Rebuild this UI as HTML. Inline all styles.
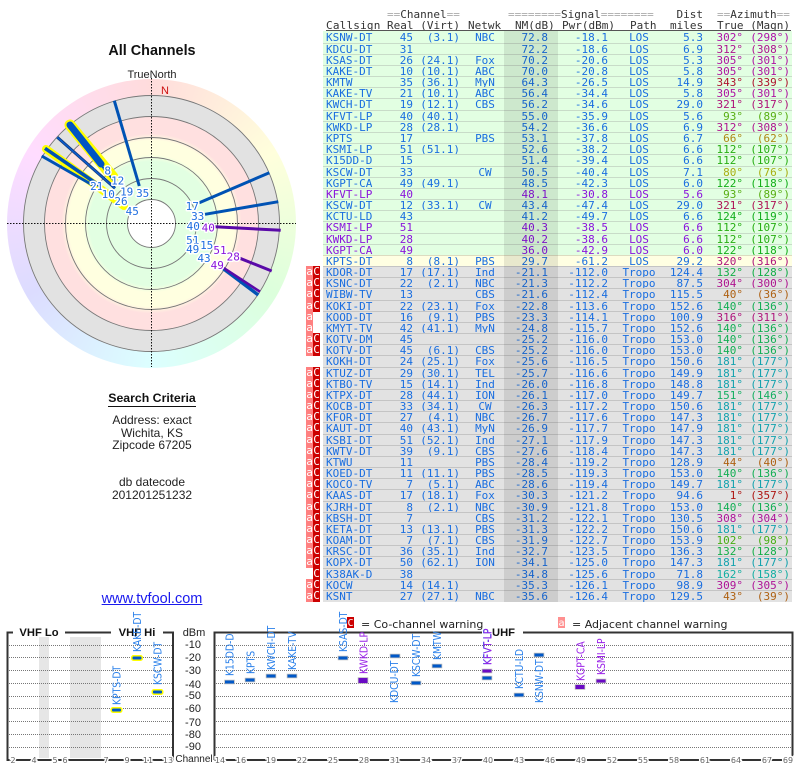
<!DOCTYPE html>
<html><head><meta charset="utf-8"><title>All Channels</title>
<style>
html,body{margin:0;padding:0;background:#fff}
body{width:800px;height:768px;overflow:hidden;position:relative;font-family:"Liberation Sans",sans-serif;color:#222}
.t{position:absolute;text-align:center;left:52px;width:200px;white-space:nowrap}
.h{position:absolute;font:11px/11px "DejaVu Sans Mono",monospace;color:#333;white-space:pre}
.h s{color:#aaa;text-decoration:none}
.r{position:absolute;left:323px;width:469px;height:12px;box-sizing:border-box;border-top:1px solid #c8dcc8;background:#e2ffe2;font:11px/11px "DejaVu Sans Mono",monospace;color:#1a6ee0}
.r i{position:absolute;top:0;font-style:normal;white-space:pre;width:60px;text-align:right}
.r i:nth-child(1){left:3px;text-align:left}
.r i:nth-child(2){left:30px}
.r i:nth-child(3){left:77px}
.r i:nth-child(4){left:132px;text-align:center}
.r i:nth-child(5){left:165px}
.r i:nth-child(6){left:225px}
.r i:nth-child(7){left:286px;text-align:center}
.r i:nth-child(8){left:320px}
.r i:nth-child(9){left:360px;color:hsl(var(--h),80%,38%)}
.r i:nth-child(10){left:407px;color:hsl(var(--h),80%,38%)}
.y{background:#ffffe2;border-top-color:#dcdcc0}
.x{background:#e2e2e2;border-top-color:#c4c4c4}
.p{color:#8a14dc}
.w{position:absolute;left:0;width:0;height:12px;font:11px/12px "DejaVu Sans Mono",monospace;color:#fff}
.w b,.w em{position:absolute;top:0;width:7px;height:12px;text-align:center;font-weight:normal;font-style:normal}
.w b{left:306px;background:#ff8080}
.w em{left:313px;background:#cc0000}
svg{position:absolute;left:0;top:0}
.disc{position:absolute;border-radius:50%}
</style></head><body>
<div class="t" style="top:43px;font-size:14.4px;line-height:16px;font-weight:bold;color:#111">All Channels</div>
<div class="t" style="top:69px;font-size:11px;line-height:13px">TrueNorth</div>
<div class="disc" style="left:7px;top:79px;width:289px;height:289px;background:conic-gradient(#ffdcdc,#ffffdc 60deg,#dcffdc 120deg,#dcffff 180deg,#dcdcff 240deg,#ffdcff 300deg,#ffdcdc)"></div>
<div class="disc" style="left:23px;top:95px;width:257px;height:257px;background:radial-gradient(circle closest-side,#fff 0,#fff 24px,#e2ffe2 24px,#e2ffe2 62px,#ffffe0 69px,#ffffe0 83px,#ffe0e0 90px,#ffe0e0 106.5px,#e2e2e2 107px,#e2e2e2 128px)"></div>
<div class="t" style="top:391px;font-size:12.3px;line-height:14px;font-weight:bold;color:#111"><span style="border-bottom:1px solid #111;padding-bottom:1px">Search Criteria</span></div>
<div class="t" style="top:414px;font-size:12px;line-height:12.5px">Address: exact<br>Wichita, KS<br>Zipcode 67205</div>
<div class="t" style="top:476px;font-size:12px;line-height:12.5px">db datecode<br>201201251232</div>
<div class="t" style="top:590px;font-size:14.5px;line-height:18px;color:#1a1aee;text-decoration:underline">www.tvfool.com</div>

<div class="h" style="left:387px;top:9px"><s>==</s>Channel<s>==</s></div>
<div class="h" style="left:508px;top:9px"><s>========</s>Signal<s>========</s></div>
<div class="h" style="left:676px;top:9px;width:27px;text-align:right">Dist</div>
<div class="h" style="left:717px;top:9px"><s>==</s>Azimuth<s>==</s></div>
<div class="h" style="left:326px;top:20px;letter-spacing:.2px">Callsign</div>
<div class="h" style="left:387px;top:20px">Real</div>
<div class="h" style="left:420px;top:20px;width:40px;text-align:right">(Virt)</div>
<div class="h" style="left:468px;top:20px">Netwk</div>
<div class="h" style="left:515px;top:20px">NM(dB)</div>
<div class="h" style="left:562px;top:20px">Pwr(dBm)</div>
<div class="h" style="left:630px;top:20px">Path</div>
<div class="h" style="left:670px;top:20px;width:33px;text-align:right">miles</div>
<div class="h" style="left:717px;top:20px">True</div>
<div class="h" style="left:750px;top:20px;width:40px;text-align:right">(Magn)</div>
<div style="position:absolute;left:326px;top:30px;width:465px;height:1px;background:#555"></div>

<div class="r" style="top:31px;--h:302;border-top-color:#e2ffe2"><i>KSNW-DT</i><i>45</i><i>(3.1)</i><i>NBC</i><i>72.8</i><i>-18.1</i><i>LOS</i><i>5.3</i><i>302°</i><i>(298°)</i></div>
<div class="r" style="top:43px;--h:312"><i>KDCU-DT</i><i>31</i><i></i><i></i><i>72.2</i><i>-18.6</i><i>LOS</i><i>6.9</i><i>312°</i><i>(308°)</i></div>
<div class="r" style="top:54px;--h:305"><i>KSAS-DT</i><i>26</i><i>(24.1)</i><i>Fox</i><i>70.2</i><i>-20.6</i><i>LOS</i><i>5.3</i><i>305°</i><i>(301°)</i></div>
<div class="r" style="top:65px;--h:305"><i>KAKE-DT</i><i>10</i><i>(10.1)</i><i>ABC</i><i>70.0</i><i>-20.8</i><i>LOS</i><i>5.8</i><i>305°</i><i>(301°)</i></div>
<div class="r" style="top:76px;--h:350"><i>KMTW</i><i>35</i><i>(36.1)</i><i>MyN</i><i>64.3</i><i>-26.5</i><i>LOS</i><i>14.9</i><i>343°</i><i>(339°)</i></div>
<div class="r" style="top:87px;--h:305"><i>KAKE-TV</i><i>21</i><i>(10.1)</i><i>ABC</i><i>56.4</i><i>-34.4</i><i>LOS</i><i>5.8</i><i>305°</i><i>(301°)</i></div>
<div class="r" style="top:98px;--h:321"><i>KWCH-DT</i><i>19</i><i>(12.1)</i><i>CBS</i><i>56.2</i><i>-34.6</i><i>LOS</i><i>29.0</i><i>321°</i><i>(317°)</i></div>
<div class="r" style="top:110px;--h:93"><i>KFVT-LP</i><i>40</i><i>(40.1)</i><i></i><i>55.0</i><i>-35.9</i><i>LOS</i><i>5.6</i><i>93°</i><i>(89°)</i></div>
<div class="r" style="top:121px;--h:312"><i>KWKD-LP</i><i>28</i><i>(28.1)</i><i></i><i>54.2</i><i>-36.6</i><i>LOS</i><i>6.9</i><i>312°</i><i>(308°)</i></div>
<div class="r" style="top:132px;--h:45"><i>KPTS</i><i>17</i><i></i><i>PBS</i><i>53.1</i><i>-37.8</i><i>LOS</i><i>6.7</i><i>66°</i><i>(62°)</i></div>
<div class="r" style="top:143px;--h:112"><i>KSMI-LP</i><i>51</i><i>(51.1)</i><i></i><i>52.6</i><i>-38.2</i><i>LOS</i><i>6.6</i><i>112°</i><i>(107°)</i></div>
<div class="r" style="top:154px;--h:112"><i>K15DD-D</i><i>15</i><i></i><i></i><i>51.4</i><i>-39.4</i><i>LOS</i><i>6.6</i><i>112°</i><i>(107°)</i></div>
<div class="r" style="top:166px;--h:62"><i>KSCW-DT</i><i>33</i><i></i><i>CW</i><i>50.5</i><i>-40.4</i><i>LOS</i><i>7.1</i><i>80°</i><i>(76°)</i></div>
<div class="r" style="top:177px;--h:122"><i>KGPT-CA</i><i>49</i><i>(49.1)</i><i></i><i>48.5</i><i>-42.3</i><i>LOS</i><i>6.0</i><i>122°</i><i>(118°)</i></div>
<div class="r p" style="top:188px;--h:93"><i>KFVT-LP</i><i>40</i><i></i><i></i><i>48.1</i><i>-30.8</i><i>LOS</i><i>5.6</i><i>93°</i><i>(89°)</i></div>
<div class="r" style="top:199px;--h:335"><i>KSCW-DT</i><i>12</i><i>(33.1)</i><i>CW</i><i>43.4</i><i>-47.4</i><i>LOS</i><i>29.0</i><i>321°</i><i>(317°)</i></div>
<div class="r" style="top:210px;--h:124"><i>KCTU-LD</i><i>43</i><i></i><i></i><i>41.2</i><i>-49.7</i><i>LOS</i><i>6.6</i><i>124°</i><i>(119°)</i></div>
<div class="r p" style="top:221px;--h:112"><i>KSMI-LP</i><i>51</i><i></i><i></i><i>40.3</i><i>-38.5</i><i>LOS</i><i>6.6</i><i>112°</i><i>(107°)</i></div>
<div class="r p" style="top:233px;--h:112"><i>KWKD-LP</i><i>28</i><i></i><i></i><i>40.2</i><i>-38.6</i><i>LOS</i><i>6.6</i><i>112°</i><i>(107°)</i></div>
<div class="r p" style="top:244px;--h:122"><i>KGPT-CA</i><i>49</i><i></i><i></i><i>36.0</i><i>-42.9</i><i>LOS</i><i>6.0</i><i>122°</i><i>(118°)</i></div>
<div class="r y" style="top:255px;--h:320"><i>KPTS-DT</i><i>8</i><i>(8.1)</i><i>PBS</i><i>29.7</i><i>-61.2</i><i>LOS</i><i>29.2</i><i>320°</i><i>(316°)</i></div>
<div class="r x" style="top:266px;--h:140"><i>KDOR-DT</i><i>17</i><i>(17.1)</i><i>Ind</i><i>-21.1</i><i>-112.0</i><i>Tropo</i><i>124.4</i><i>132°</i><i>(128°)</i></div>
<div class="r x" style="top:277px;--h:312"><i>KSNC-DT</i><i>22</i><i>(2.1)</i><i>NBC</i><i>-21.3</i><i>-112.2</i><i>Tropo</i><i>87.5</i><i>304°</i><i>(300°)</i></div>
<div class="r x" style="top:288px;--h:30"><i>WIBW-TV</i><i>13</i><i></i><i>CBS</i><i>-21.6</i><i>-112.4</i><i>Tropo</i><i>115.5</i><i>40°</i><i>(36°)</i></div>
<div class="r x" style="top:300px;--h:145"><i>KOKI-DT</i><i>22</i><i>(23.1)</i><i>Fox</i><i>-22.8</i><i>-113.6</i><i>Tropo</i><i>152.6</i><i>140°</i><i>(136°)</i></div>
<div class="r x" style="top:311px;--h:320"><i>KOOD-DT</i><i>16</i><i>(9.1)</i><i>PBS</i><i>-23.3</i><i>-114.1</i><i>Tropo</i><i>100.9</i><i>316°</i><i>(311°)</i></div>
<div class="r x" style="top:322px;--h:145"><i>KMYT-TV</i><i>42</i><i>(41.1)</i><i>MyN</i><i>-24.8</i><i>-115.7</i><i>Tropo</i><i>152.6</i><i>140°</i><i>(136°)</i></div>
<div class="r x" style="top:333px;--h:145"><i>KOTV-DM</i><i>45</i><i></i><i></i><i>-25.2</i><i>-116.0</i><i>Tropo</i><i>153.0</i><i>140°</i><i>(136°)</i></div>
<div class="r x" style="top:344px;--h:145"><i>KOTV-DT</i><i>45</i><i>(6.1)</i><i>CBS</i><i>-25.2</i><i>-116.0</i><i>Tropo</i><i>153.0</i><i>140°</i><i>(136°)</i></div>
<div class="r x" style="top:355px;--h:185"><i>KOKH-DT</i><i>24</i><i>(25.1)</i><i>Fox</i><i>-25.6</i><i>-116.5</i><i>Tropo</i><i>150.6</i><i>181°</i><i>(177°)</i></div>
<div class="r x" style="top:367px;--h:185"><i>KTUZ-DT</i><i>29</i><i>(30.1)</i><i>TEL</i><i>-25.7</i><i>-116.6</i><i>Tropo</i><i>149.9</i><i>181°</i><i>(177°)</i></div>
<div class="r x" style="top:378px;--h:185"><i>KTBO-TV</i><i>15</i><i>(14.1)</i><i>Ind</i><i>-26.0</i><i>-116.8</i><i>Tropo</i><i>148.8</i><i>181°</i><i>(177°)</i></div>
<div class="r x" style="top:389px;--h:150"><i>KTPX-DT</i><i>28</i><i>(44.1)</i><i>ION</i><i>-26.1</i><i>-117.0</i><i>Tropo</i><i>149.7</i><i>151°</i><i>(146°)</i></div>
<div class="r x" style="top:400px;--h:185"><i>KOCB-DT</i><i>33</i><i>(34.1)</i><i>CW</i><i>-26.3</i><i>-117.2</i><i>Tropo</i><i>150.6</i><i>181°</i><i>(177°)</i></div>
<div class="r x" style="top:411px;--h:185"><i>KFOR-DT</i><i>27</i><i>(4.1)</i><i>NBC</i><i>-26.7</i><i>-117.6</i><i>Tropo</i><i>147.3</i><i>181°</i><i>(177°)</i></div>
<div class="r x" style="top:422px;--h:185"><i>KAUT-DT</i><i>40</i><i>(43.1)</i><i>MyN</i><i>-26.9</i><i>-117.7</i><i>Tropo</i><i>147.9</i><i>181°</i><i>(177°)</i></div>
<div class="r x" style="top:434px;--h:185"><i>KSBI-DT</i><i>51</i><i>(52.1)</i><i>Ind</i><i>-27.1</i><i>-117.9</i><i>Tropo</i><i>147.3</i><i>181°</i><i>(177°)</i></div>
<div class="r x" style="top:445px;--h:185"><i>KWTV-DT</i><i>39</i><i>(9.1)</i><i>CBS</i><i>-27.6</i><i>-118.4</i><i>Tropo</i><i>147.3</i><i>181°</i><i>(177°)</i></div>
<div class="r x" style="top:456px;--h:30"><i>KTWU</i><i>11</i><i></i><i>PBS</i><i>-28.4</i><i>-119.2</i><i>Tropo</i><i>128.9</i><i>44°</i><i>(40°)</i></div>
<div class="r x" style="top:467px;--h:145"><i>KOED-DT</i><i>11</i><i>(11.1)</i><i>PBS</i><i>-28.5</i><i>-119.3</i><i>Tropo</i><i>153.0</i><i>140°</i><i>(136°)</i></div>
<div class="r x" style="top:478px;--h:185"><i>KOCO-TV</i><i>7</i><i>(5.1)</i><i>ABC</i><i>-28.6</i><i>-119.4</i><i>Tropo</i><i>149.7</i><i>181°</i><i>(177°)</i></div>
<div class="r x" style="top:489px;--h:1"><i>KAAS-DT</i><i>17</i><i>(18.1)</i><i>Fox</i><i>-30.3</i><i>-121.2</i><i>Tropo</i><i>94.6</i><i>1°</i><i>(357°)</i></div>
<div class="r x" style="top:501px;--h:145"><i>KJRH-DT</i><i>8</i><i>(2.1)</i><i>NBC</i><i>-30.9</i><i>-121.8</i><i>Tropo</i><i>153.0</i><i>140°</i><i>(136°)</i></div>
<div class="r x" style="top:512px;--h:308"><i>KBSH-DT</i><i>7</i><i></i><i>CBS</i><i>-31.2</i><i>-122.1</i><i>Tropo</i><i>130.5</i><i>308°</i><i>(304°)</i></div>
<div class="r x" style="top:523px;--h:185"><i>KETA-DT</i><i>13</i><i>(13.1)</i><i>PBS</i><i>-31.3</i><i>-122.2</i><i>Tropo</i><i>150.6</i><i>181°</i><i>(177°)</i></div>
<div class="r x" style="top:534px;--h:100"><i>KOAM-DT</i><i>7</i><i>(7.1)</i><i>CBS</i><i>-31.9</i><i>-122.7</i><i>Tropo</i><i>153.9</i><i>102°</i><i>(98°)</i></div>
<div class="r x" style="top:545px;--h:140"><i>KRSC-DT</i><i>36</i><i>(35.1)</i><i>Ind</i><i>-32.7</i><i>-123.5</i><i>Tropo</i><i>136.3</i><i>132°</i><i>(128°)</i></div>
<div class="r x" style="top:556px;--h:185"><i>KOPX-DT</i><i>50</i><i>(62.1)</i><i>ION</i><i>-34.1</i><i>-125.0</i><i>Tropo</i><i>147.3</i><i>181°</i><i>(177°)</i></div>
<div class="r x" style="top:568px;--h:175"><i>K38AK-D</i><i>38</i><i></i><i></i><i>-34.8</i><i>-125.6</i><i>Tropo</i><i>71.8</i><i>162°</i><i>(158°)</i></div>
<div class="r x" style="top:579px;--h:309"><i>KOCW</i><i>14</i><i>(14.1)</i><i></i><i>-35.3</i><i>-126.1</i><i>Tropo</i><i>98.9</i><i>309°</i><i>(305°)</i></div>
<div class="r x" style="top:590px;--h:30"><i>KSNT</i><i>27</i><i>(27.1)</i><i>NBC</i><i>-35.6</i><i>-126.4</i><i>Tropo</i><i>129.5</i><i>43°</i><i>(39°)</i></div>
<div style="position:absolute;left:504px;top:31px;width:54px;height:571px;background:rgba(0,0,0,.09)"></div>

<div class="w" style="top:266px"><b>a</b><em>C</em></div>
<div class="w" style="top:277px"><b>a</b><em>C</em></div>
<div class="w" style="top:288px"><b>a</b><em>C</em></div>
<div class="w" style="top:300px"><b>a</b><em>C</em></div>
<div class="w" style="top:311px"><b>a</b></div>
<div class="w" style="top:322px"><b>a</b></div>
<div class="w" style="top:333px"><b>a</b><em>C</em></div>
<div class="w" style="top:344px"><b>a</b><em>C</em></div>
<div class="w" style="top:367px"><b>a</b><em>C</em></div>
<div class="w" style="top:378px"><b>a</b><em>C</em></div>
<div class="w" style="top:389px"><b>a</b><em>C</em></div>
<div class="w" style="top:400px"><b>a</b><em>C</em></div>
<div class="w" style="top:411px"><b>a</b><em>C</em></div>
<div class="w" style="top:422px"><b>a</b><em>C</em></div>
<div class="w" style="top:434px"><b>a</b><em>C</em></div>
<div class="w" style="top:445px"><b>a</b><em>C</em></div>
<div class="w" style="top:456px"><b>a</b><em>C</em></div>
<div class="w" style="top:467px"><b>a</b><em>C</em></div>
<div class="w" style="top:478px"><b>a</b><em>C</em></div>
<div class="w" style="top:489px"><b>a</b><em>C</em></div>
<div class="w" style="top:501px"><b>a</b><em>C</em></div>
<div class="w" style="top:512px"><b>a</b><em>C</em></div>
<div class="w" style="top:523px"><b>a</b><em>C</em></div>
<div class="w" style="top:534px"><b>a</b><em>C</em></div>
<div class="w" style="top:545px"><b>a</b><em>C</em></div>
<div class="w" style="top:556px"><b>a</b><em>C</em></div>
<div class="w" style="top:568px"><em>C</em></div>
<div class="w" style="top:579px"><b>a</b><em>C</em></div>
<div class="w" style="top:590px"><b>a</b><em>C</em></div>

<svg width="800" height="768" viewBox="0 0 800 768" xmlns="http://www.w3.org/2000/svg">
<g fill="none" stroke="#777" stroke-width=".9">
<circle cx="151.5" cy="223.5" r="24"/><circle cx="151.5" cy="223.5" r="45"/><circle cx="151.5" cy="223.5" r="66"/><circle cx="151.5" cy="223.5" r="86"/><circle cx="151.5" cy="223.5" r="107"/><circle cx="151.5" cy="223.5" r="128"/>
</g>
<path d="M7 223.5H296M151.5 78V367" stroke="#111" stroke-width="1" stroke-dasharray="1.5 1.5" fill="none"/>
<text x="165" y="94" font-family="Liberation Sans" font-size="11" fill="#cc1111" text-anchor="middle">N</text>
<g stroke-linecap="round" fill="none">
<path d="M70 125L113 177" stroke="#ffff00" stroke-width="11"/>
<path d="M70 125L101 164" stroke="#0055c4" stroke-width="7"/>
<path d="M101 165L114 181" stroke="#0055c4" stroke-width="2"/>
<path d="M46 149L124 206" stroke="#ffff00" stroke-width="8"/>
</g>
<g fill="none" stroke-linecap="butt">
<path d="M139.3 186L114.3 100.7" stroke="#0052b4" stroke-width="3"/>
<path d="M57.3 137.3L115 188.3" stroke="#163a78" stroke-width="3"/>
<path d="M57.3 137.3L115 188.3" stroke="#0a5cd0" stroke-width="1.4"/>
<path d="M45 148.3L100 186" stroke="#0052b4" stroke-width="3.6"/>
<path d="M41.7 156L96 187" stroke="#0052b4" stroke-width="3"/>
<path d="M199.3 202.7L269.3 172.7" stroke="#0052b4" stroke-width="3"/>
<path d="M205 214.3L278.3 201.7" stroke="#0052b4" stroke-width="3"/>
<path d="M215 226.7L280.7 230.3" stroke="#5a0aa8" stroke-width="3"/>
<path d="M240 258.3L271.7 271" stroke="#5a0aa8" stroke-width="3"/>
<path d="M222.7 268.3L258.3 295" stroke="#0052b4" stroke-width="3.4"/>
<path d="M222.7 267.3L260 291.7" stroke="#5a0aa8" stroke-width="2.6"/>
</g>
<g font-family="DejaVu Sans Mono" font-size="11" text-anchor="middle" fill="#1f6ee0" stroke="#fff" stroke-width="3" stroke-linejoin="round" style="paint-order:stroke">
<text x="107.7" y="174.5">8</text><text x="117.7" y="184.5">12</text><text x="126.7" y="195.5">19</text><text x="142.7" y="197">35</text><text x="96.7" y="190">21</text><text x="108.3" y="198">10</text><text x="121" y="205">26</text><text x="132.3" y="215">45</text><text x="192.3" y="210">17</text><text x="197.7" y="220">33</text><text x="193.3" y="230">40</text><text x="192.7" y="244">51</text><text x="206.7" y="249">15</text><text x="192.7" y="253">49</text><text x="204" y="262">43</text>
<g fill="#8a14dc"><text x="208.3" y="231.5">40</text><text x="220" y="254">51</text><text x="233.3" y="260.5">28</text><text x="217.3" y="269">49</text></g>
</g>

<rect x="39" y="637" width="10" height="121" fill="#e6e6e6"/>
<rect x="70" y="637" width="31" height="121" fill="#e6e6e6"/>
<path d="M9 645.5H172M9 657.5H172M9 670.5H172M9 683.5H172M9 696.5H172M9 708.5H172M9 721.5H172M9 734.5H172M9 747.5H172M216 645.5H791M216 657.5H791M216 670.5H791M216 683.5H791M216 696.5H791M216 708.5H791M216 721.5H791M216 734.5H791M216 747.5H791" stroke="#777" stroke-width="1" stroke-dasharray="1 1" fill="none"/>
<path d="M13 632.5H7.5V760H173V632.5H163M111 632.5H65M214.5 760V632.5H482M523 632.5H792.5V760H214.5" stroke="#333" stroke-width="2" fill="none"/>
<g font-family="Liberation Sans" font-size="11.2" font-weight="bold" fill="#111" text-anchor="middle">
<text x="39" y="636">VHF Lo</text><text x="137" y="636">VHF Hi</text><text x="503.5" y="636">UHF</text>
</g>
<g font-family="Liberation Sans" font-size="11" fill="#222" text-anchor="middle">
<text x="194" y="636">dBm</text><text x="193" y="648">-10</text><text x="193" y="661">-20</text><text x="193" y="674">-30</text><text x="193" y="688">-40</text><text x="193" y="699">-50</text><text x="193" y="712">-60</text><text x="193" y="726">-70</text><text x="193" y="738">-80</text><text x="193" y="750">-90</text>
</g>
<text x="194" y="762" font-family="Liberation Sans" font-size="10" fill="#222" text-anchor="middle" stroke="#fff" stroke-width="2" style="paint-order:stroke">Channel</text>
<g font-family="DejaVu Sans" font-size="8" fill="#666" text-anchor="middle" stroke="#fff" stroke-width="3" style="paint-order:stroke">
<text x="13" y="763">2</text><text x="34" y="763">4</text><text x="55" y="763">5</text><text x="65" y="763">6</text><text x="106" y="763">7</text><text x="127" y="763">9</text><text x="148" y="763">11</text><text x="168" y="763">13</text>
<text x="220" y="763">14</text><text x="241" y="763">16</text><text x="271" y="763">19</text><text x="302" y="763">22</text><text x="333" y="763">25</text><text x="364" y="763">28</text><text x="395" y="763">31</text><text x="426" y="763">34</text><text x="457" y="763">37</text><text x="488" y="763">40</text><text x="519" y="763">43</text><text x="550" y="763">46</text><text x="581" y="763">49</text><text x="612" y="763">52</text><text x="643" y="763">55</text><text x="674" y="763">58</text><text x="705" y="763">61</text><text x="736" y="763">64</text><text x="767" y="763">67</text><text x="788" y="763">69</text>
</g>
<g font-family="DejaVu Sans" font-size="10.5" fill="#2a80ea">
<text transform="translate(120.5,705) rotate(-90) scale(.88,1)">KPTS-DT</text>
<text transform="translate(141,652) rotate(-90) scale(.88,1)">KAKE-DT</text>
<text transform="translate(161.5,685) rotate(-90) scale(.88,1)">KSCW-DT</text>
<text transform="translate(233.5,676) rotate(-90) scale(.88,1)">K15DD-D</text>
<text transform="translate(254.5,674) rotate(-90) scale(.88,1)">KPTS</text>
<text transform="translate(275,670) rotate(-90) scale(.88,1)">KWCH-DT</text>
<text transform="translate(296,670) rotate(-90) scale(.88,1)">KAKE-TV</text>
<text transform="translate(347,652) rotate(-90) scale(.88,1)">KSAS-DT</text>
<text transform="translate(398,703) rotate(-90) scale(.88,1)">KDCU-DT</text>
<text transform="translate(420,677) rotate(-90) scale(.88,1)">KSCW-DT</text>
<text transform="translate(441,660) rotate(-90) scale(.88,1)">KMTW</text>
<text transform="translate(491,665) rotate(-90) scale(.88,1)">KFVT-LP</text>
<text transform="translate(523,689) rotate(-90) scale(.88,1)">KCTU-LD</text>
<text transform="translate(543,703) rotate(-90) scale(.88,1)">KSNW-DT</text>
<g fill="#9a22e8">
<text transform="translate(367.5,674) rotate(-90) scale(.88,1)">KWKD-LP</text>
<text transform="translate(491.5,665) rotate(-90) scale(.88,1)">KFVT-LP</text>
<text transform="translate(584.5,681) rotate(-90) scale(.88,1)">KGPT-CA</text>
<text transform="translate(605,675) rotate(-90) scale(.88,1)">KSMI-LP</text>
</g>
</g>
<g fill="#0058c8" stroke="#bbb" stroke-width="1.5" paint-order="stroke">
<rect x="225" y="680.5" width="9" height="3"/><rect x="245.5" y="678.5" width="9" height="3"/><rect x="266.5" y="674.5" width="9" height="3"/><rect x="287.5" y="674.5" width="9" height="3"/><rect x="338.5" y="656.5" width="9" height="3"/><rect x="390.5" y="654.5" width="9" height="3"/><rect x="411.5" y="681.5" width="9" height="3"/><rect x="432.5" y="664.5" width="9" height="3"/><rect x="482.5" y="676.5" width="9" height="3"/><rect x="514.5" y="693.5" width="9" height="3"/><rect x="534.5" y="653.5" width="9" height="3"/>
</g>
<g fill="#6a0ac4" stroke="#bbb" stroke-width="1.5" paint-order="stroke">
<rect x="358.5" y="678" width="9" height="5"/><rect x="482.5" y="669.5" width="9" height="3"/><rect x="575.5" y="685" width="9" height="4"/><rect x="596.5" y="679.5" width="9" height="3"/>
</g>
<g fill="#0058c8" stroke="#ffff00" stroke-width="3" paint-order="stroke">
<rect x="112" y="708.5" width="9" height="3" rx="1"/><rect x="132.5" y="656.5" width="9" height="3" rx="1"/><rect x="153" y="690.5" width="9" height="3" rx="1"/>
</g>
<rect x="347" y="617" width="7" height="11" fill="#cc0000"/>
<text x="350.5" y="626" font-family="DejaVu Sans Mono" font-size="10" fill="#fff" text-anchor="middle">C</text>
<rect x="558" y="617" width="7" height="11" fill="#ff9090"/>
<text x="561.5" y="626" font-family="DejaVu Sans Mono" font-size="10" fill="#fff" text-anchor="middle">a</text>
<g font-family="DejaVu Sans" font-size="11" fill="#222">
<text x="361" y="628">= Co-channel warning</text>
<text x="572" y="628">= Adjacent channel warning</text>
</g>
</svg>
</body></html>
